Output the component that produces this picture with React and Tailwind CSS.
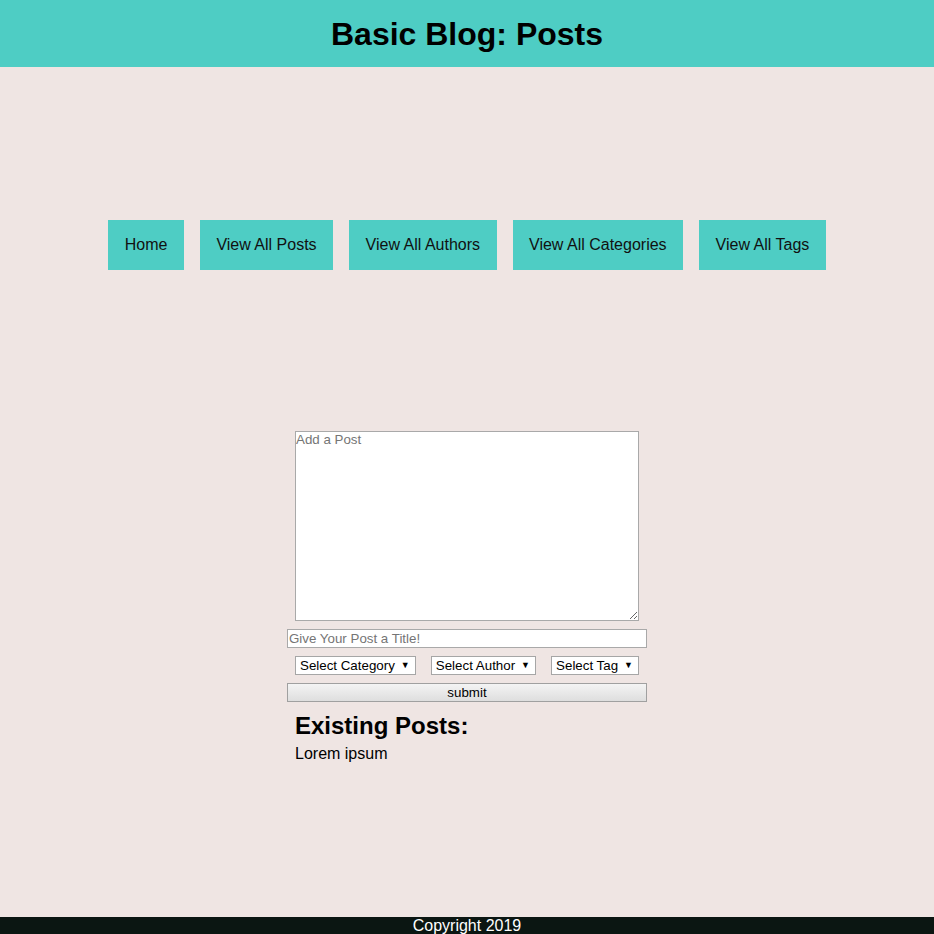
import React from 'react';

const NAV_LINKS = ['Home', 'View All Posts', 'View All Authors', 'View All Categories', 'View All Tags'];

const SelectBox = ({ label }) => (
    <div className="h-[19px] border border-[#a6a6a6] bg-white flex items-center pl-[4px] pr-[5px] text-[13.33px] text-black leading-none whitespace-nowrap">
        <span>{label}</span>
        <span className="ml-[6px] text-[9px]">▼</span>
    </div>
);

export default function App() {
    return (
        <div className="min-h-screen flex flex-col bg-[#efe5e3] font-['Liberation_Sans',Arial,sans-serif] text-black">
            <header className="h-[67px] bg-[#4ecdc4] flex items-center justify-center">
                <h1 className="text-[32px] font-bold leading-none">Basic Blog: Posts</h1>
            </header>

            <main className="flex-1 flex flex-col items-center">
                <nav className="mt-[153px] flex gap-[16px]">
                    {NAV_LINKS.map((link) => (
                        <a key={link} className="h-[50px] px-[16.5px] bg-[#4ecdc4] flex items-center text-[16px] text-[#111]">
                            {link}
                        </a>
                    ))}
                </nav>

                <form className="mt-[161px] w-[360px] flex flex-col items-center">
                    <textarea
                        placeholder="Add a Post"
                        className="w-[344px] h-[190px] bg-white border border-[#a9a9a9] text-[13.33px] leading-[15px] p-0 placeholder:text-[#757575] resize-y"
                    />
                    <input
                        placeholder="Give Your Post a Title!"
                        className="mt-[8px] w-[360px] h-[19px] bg-white border border-[#a9a9a9] text-[13.33px] px-[1px] placeholder:text-[#757575]"
                    />
                    <div className="mt-[8px] w-[344px] flex justify-between">
                        <SelectBox label="Select Category" />
                        <SelectBox label="Select Author" />
                        <SelectBox label="Select Tag" />
                    </div>
                    <button
                        type="button"
                        className="mt-[8px] w-[360px] h-[19px] border border-[#a0a0a0] bg-gradient-to-b from-[#f4f4f4] to-[#dedede] text-[13.33px] leading-none"
                    >
                        submit
                    </button>
                    <div className="w-[344px] mt-[10px]">
                        <h2 className="text-[24px] font-bold leading-[28px]">Existing Posts:</h2>
                        <p className="mt-[5px] text-[16px] leading-[18px]">Lorem ipsum</p>
                    </div>
                </form>
            </main>

            <footer className="h-[17px] bg-[#0b1612] text-white text-[16px] leading-[17px] text-center">
                Copyright 2019
            </footer>
        </div>
    );
}
